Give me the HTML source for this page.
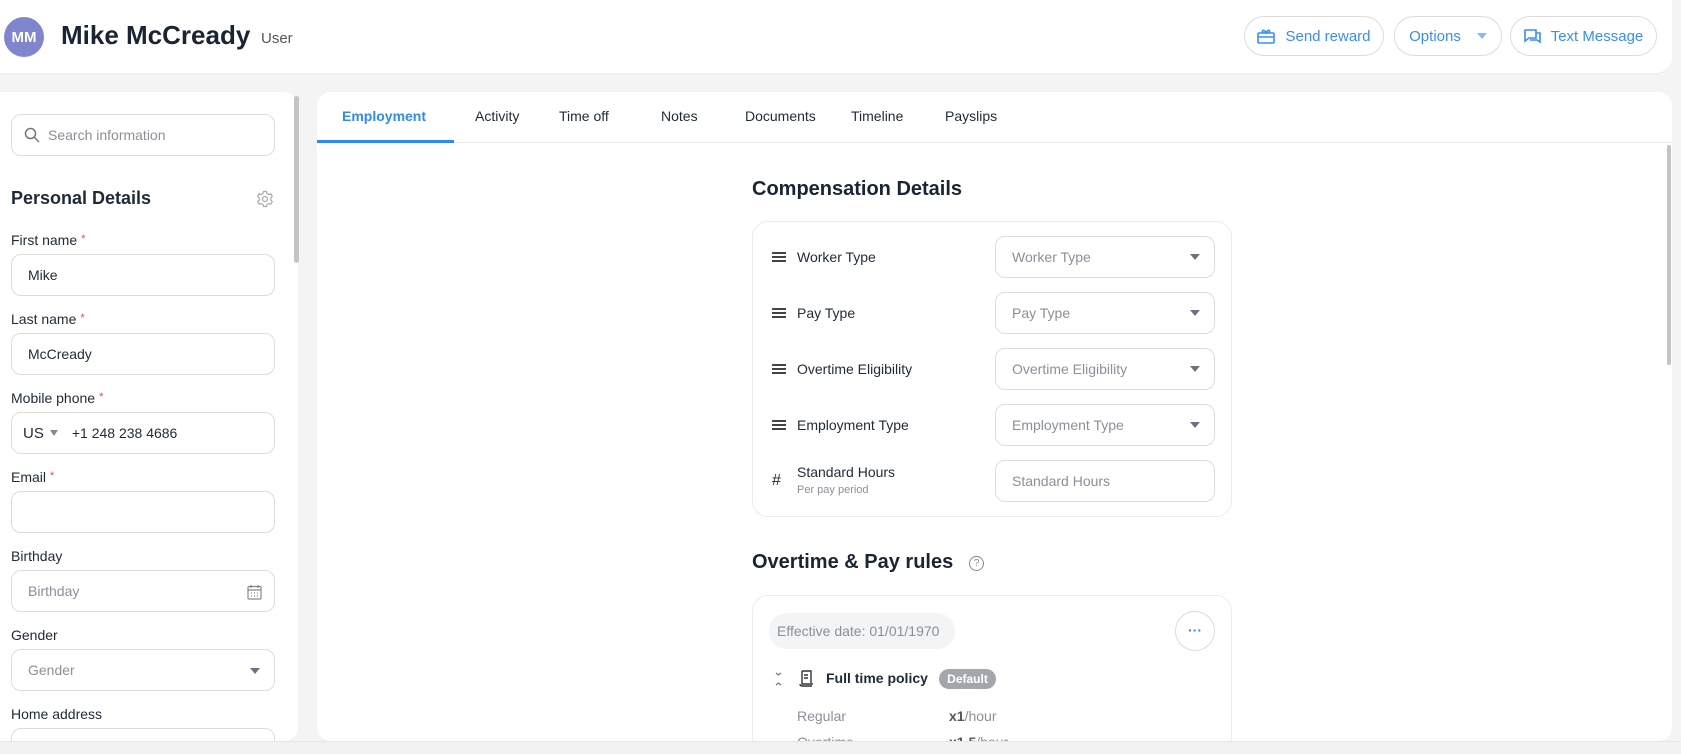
<!DOCTYPE html>
<html style="width:1681px;height:754px;overflow:hidden"><head><meta charset="utf-8"><style>
*{box-sizing:border-box;margin:0;padding:0}
body{width:1681px;height:754px;background:#f4f4f4;font-family:"Liberation Sans",sans-serif;color:#1f2a37;position:relative;overflow:hidden}
.abs{position:absolute}
.header{left:0;top:0;width:1672px;height:74px;background:#fff;border-radius:0 0 16px 0;border-bottom:1px solid #ececec}
.btn{position:absolute;top:16px;height:40px;border:1px solid #dcdcdc;border-radius:20px;color:#3a8ef0;font-size:15px;display:flex;align-items:center;justify-content:center;gap:10px;background:#fff}
.panel{background:#fff;border-radius:14px}
.lbl{position:absolute;left:11px;font-size:14px;color:#1f2a37}
.lbl i{color:#e5484d;font-style:normal;font-size:11px;margin-left:4px;vertical-align:3px}
.inp{position:absolute;left:11px;width:264px;height:42px;border:1px solid #dcdcdc;border-radius:10px;font-size:14px;display:flex;align-items:center;padding-left:16px}
.ph{color:#8a9099}
.tab{position:absolute;top:108px;font-size:14px;color:#1f2a37}
.row{position:absolute;left:772px;font-size:14px;height:20px;display:flex;align-items:center}
.sel{position:absolute;left:995px;width:220px;height:42px;border:1px solid #dcdcdc;border-radius:10px;font-size:14px;color:#8a9099;display:flex;align-items:center;padding-left:16px}
.tri{position:absolute;right:14px;top:17px;width:0;height:0;border-left:5px solid transparent;border-right:5px solid transparent;border-top:6px solid #6b7280}
.ham{position:relative;display:inline-block;width:14px;height:10px;border-top:2px solid #444;border-bottom:2px solid #444;margin-right:11px}
.ham:after{content:"";position:absolute;left:0;right:0;top:2px;border-top:2px solid #444}
</style></head><body>
<div class="abs header"></div>
<div class="abs" style="left:4px;top:17px;width:40px;height:40px;border-radius:50%;background:#7f86cc;color:#fff;font-weight:bold;font-size:15px;display:flex;align-items:center;justify-content:center">MM</div>
<div class="abs" style="left:61px;top:20px;font-size:26px;font-weight:bold;color:#1a2433">Mike McCready</div>
<div class="abs" style="left:261px;top:30px;font-size:15px;color:#555">User</div>
<div class="btn" style="left:1244px;width:140px"><svg width="18" height="16" viewBox="0 0 18 16" fill="none" stroke="#3a8ef0" stroke-width="1.6"><rect x="1" y="5" width="16" height="10" rx="1"/><path d="M1 9h16M6 5c-2-3 1-4 3 0c2-4 5-3 3 0"/></svg>Send reward</div>
<div class="btn" style="left:1394px;width:108px">Options <span style="width:0;height:0;border-left:5px solid transparent;border-right:5px solid transparent;border-top:6px solid #8ab8f0;margin-left:6px"></span></div>
<div class="btn" style="left:1510px;width:147px"><svg width="17" height="16" viewBox="0 0 17 16" fill="none" stroke="#3a8ef0" stroke-width="1.6"><path d="M1 2h11v8H5l-4 3zM12 5h4v9l-3-2H6"/></svg>Text Message</div>

<div class="abs panel" style="left:0;top:92px;width:298px;height:649px;border-radius:0 14px 14px 0;overflow:hidden">
<div class="abs" style="left:11px;top:636px;width:264px;height:30px;border:1px solid #dcdcdc;border-radius:10px"></div>
</div>
<div class="abs" style="left:294px;top:96px;width:5px;height:167px;background:#c4c4c4;border-radius:3px"></div>
<div class="inp" style="top:114px;height:42px;width:264px;padding-left:12px"><svg width="16" height="16" viewBox="0 0 16 16" fill="none" stroke="#777" stroke-width="1.5"><circle cx="6.5" cy="6.5" r="5"/><path d="M10 10l5 5"/></svg><span class="ph" style="margin-left:8px">Search information</span></div>
<div class="abs" style="left:11px;top:188px;font-size:18px;font-weight:bold">Personal Details</div>
<svg class="abs" style="left:256px;top:190px" width="18" height="18" viewBox="0 0 18 18" fill="none" stroke="#aaa" stroke-width="1.2"><circle cx="9" cy="9" r="2.5"/><path d="M7.5 1.5h3l.5 2 1.8 1 2-.7 1.5 2.6-1.5 1.4v2.4l1.5 1.4-1.5 2.6-2-.7-1.8 1-.5 2h-3l-.5-2-1.8-1-2 .7-1.5-2.6 1.5-1.4V7.8L1.7 6.4l1.5-2.6 2 .7 1.8-1z"/></svg>
<div class="lbl" style="top:232px">First name<i>*</i></div>
<div class="inp" style="top:254px">Mike</div>
<div class="lbl" style="top:311px">Last name<i>*</i></div>
<div class="inp" style="top:333px">McCready</div>
<div class="lbl" style="top:390px">Mobile phone<i>*</i></div>
<div class="inp" style="top:412px;padding-left:11px"><b style="font-weight:normal;font-size:15px">US</b><span style="width:0;height:0;border-left:4px solid transparent;border-right:4px solid transparent;border-top:6px solid #888;margin:0 14px 0 6px"></span>+1 248 238 4686</div>
<div class="lbl" style="top:469px">Email<i>*</i></div>
<div class="inp" style="top:491px"></div>
<div class="lbl" style="top:548px">Birthday</div>
<div class="inp" style="top:570px"><span class="ph">Birthday</span><svg style="position:absolute;right:12px;top:13px" width="15" height="16" viewBox="0 0 15 16" fill="none" stroke="#888" stroke-width="1.2"><rect x="1" y="2.5" width="13" height="12.5" rx="1"/><path d="M1 6h13M4 1v3M11 1v3M4 9h1M7 9h1M10 9h1M4 12h1M7 12h1M10 12h1"/></svg></div>
<div class="lbl" style="top:627px">Gender</div>
<div class="inp" style="top:649px"><span class="ph">Gender</span><span class="tri" style="top:18px"></span></div>
<div class="lbl" style="top:706px">Home address</div>

<div class="abs panel" style="left:317px;top:92px;width:1355px;height:649px;overflow:hidden">
<div class="abs" style="left:435px;top:503px;width:480px;height:170px;border:1px solid #ececec;border-radius:16px"></div>
</div>
<div class="tab" style="left:342px;color:#2e8bf0;font-weight:bold">Employment</div>
<div class="tab" style="left:475px">Activity</div>
<div class="tab" style="left:559px">Time off</div>
<div class="tab" style="left:661px">Notes</div>
<div class="tab" style="left:745px">Documents</div>
<div class="tab" style="left:851px">Timeline</div>
<div class="tab" style="left:945px">Payslips</div>
<div class="abs" style="left:317px;top:142px;width:1355px;height:1px;background:#ececec"></div>
<div class="abs" style="left:317px;top:140px;width:137px;height:3px;background:#2e8bf0"></div>
<div class="abs" style="left:1667px;top:145px;width:4px;height:220px;background:#c4c4c4;border-radius:2px"></div>

<div class="abs" style="left:752px;top:178px;font-size:20px;font-weight:bold;color:#1a2433">Compensation Details</div>
<div class="abs" style="left:752px;top:221px;width:480px;height:296px;border:1px solid #ececec;border-radius:16px"></div>
<div class="row" style="top:247px"><span class="ham"></span>Worker Type</div>
<div class="sel" style="top:236px">Worker Type<span class="tri"></span></div>
<div class="row" style="top:303px"><span class="ham"></span>Pay Type</div>
<div class="sel" style="top:292px">Pay Type<span class="tri"></span></div>
<div class="row" style="top:359px"><span class="ham"></span>Overtime Eligibility</div>
<div class="sel" style="top:348px">Overtime Eligibility<span class="tri"></span></div>
<div class="row" style="top:415px"><span class="ham"></span>Employment Type</div>
<div class="sel" style="top:404px">Employment Type<span class="tri"></span></div>
<div class="row" style="top:471px;font-size:16px">#</div>
<div class="abs" style="left:797px;top:464px;font-size:14px">Standard Hours</div>
<div class="abs" style="left:797px;top:484px;font-size:11px;color:#8a9099">Per pay period</div>
<div class="sel" style="top:460px">Standard Hours</div>

<div class="abs" style="left:752px;top:551px;font-size:20px;font-weight:bold;color:#1a2433">Overtime &amp; Pay rules</div>
<div class="abs" style="left:969px;top:556px;width:15px;height:15px;border:1.3px solid #888;border-radius:50%;font-size:10px;color:#888;text-align:center;line-height:13px">?</div>
<div class="abs" style="left:769px;top:613px;width:186px;height:36px;background:#f3f4f5;border-radius:18px;font-size:14px;color:#8a9099;line-height:36px;padding-left:8px">Effective date: 01/01/1970</div>
<div class="abs" style="left:1175px;top:611px;width:40px;height:40px;border:1px solid #dcdcdc;border-radius:50%;color:#2e8bf0;text-align:center;line-height:36px;font-weight:bold;font-size:14px">···</div>
<svg class="abs" style="left:774px;top:672px" width="9" height="14" viewBox="0 0 9 14" fill="none" stroke="#777" stroke-width="1.2"><path d="M2 1l2.5 2L7 1M2 13l2.5-2L7 13"/></svg>
<svg class="abs" style="left:799px;top:670px" width="15" height="17" viewBox="0 0 15 17" fill="none" stroke="#333" stroke-width="1.4"><path d="M3 1h9v12M3 1v13h11M5 5h4M5 8h4M1 14c0 2 2 2 2 2h10"/></svg>
<div class="abs" style="left:826px;top:670px;font-size:14px;font-weight:bold">Full time policy</div>
<div class="abs" style="left:939px;top:669px;width:57px;height:20px;background:#a3a7ad;border-radius:10px;color:#fff;font-size:12px;font-weight:bold;text-align:center;line-height:20px">Default</div>
<div class="abs" style="left:797px;top:708px;font-size:14px;color:#8a9099">Regular</div>
<div class="abs" style="left:949px;top:708px;font-size:14px;color:#8a9099"><b style="color:#555">x1</b>/hour</div>
<div class="abs" style="left:797px;top:734px;font-size:14px;color:#8a9099">Overtime</div>
<div class="abs" style="left:949px;top:734px;font-size:14px;color:#8a9099"><b style="color:#555">x1.5</b>/hour</div>
<div class="abs" style="left:0;top:741px;width:1681px;height:13px;background:#f2f2f2;border-top:1px solid #e6e6e6;z-index:5"></div>
</body></html>
